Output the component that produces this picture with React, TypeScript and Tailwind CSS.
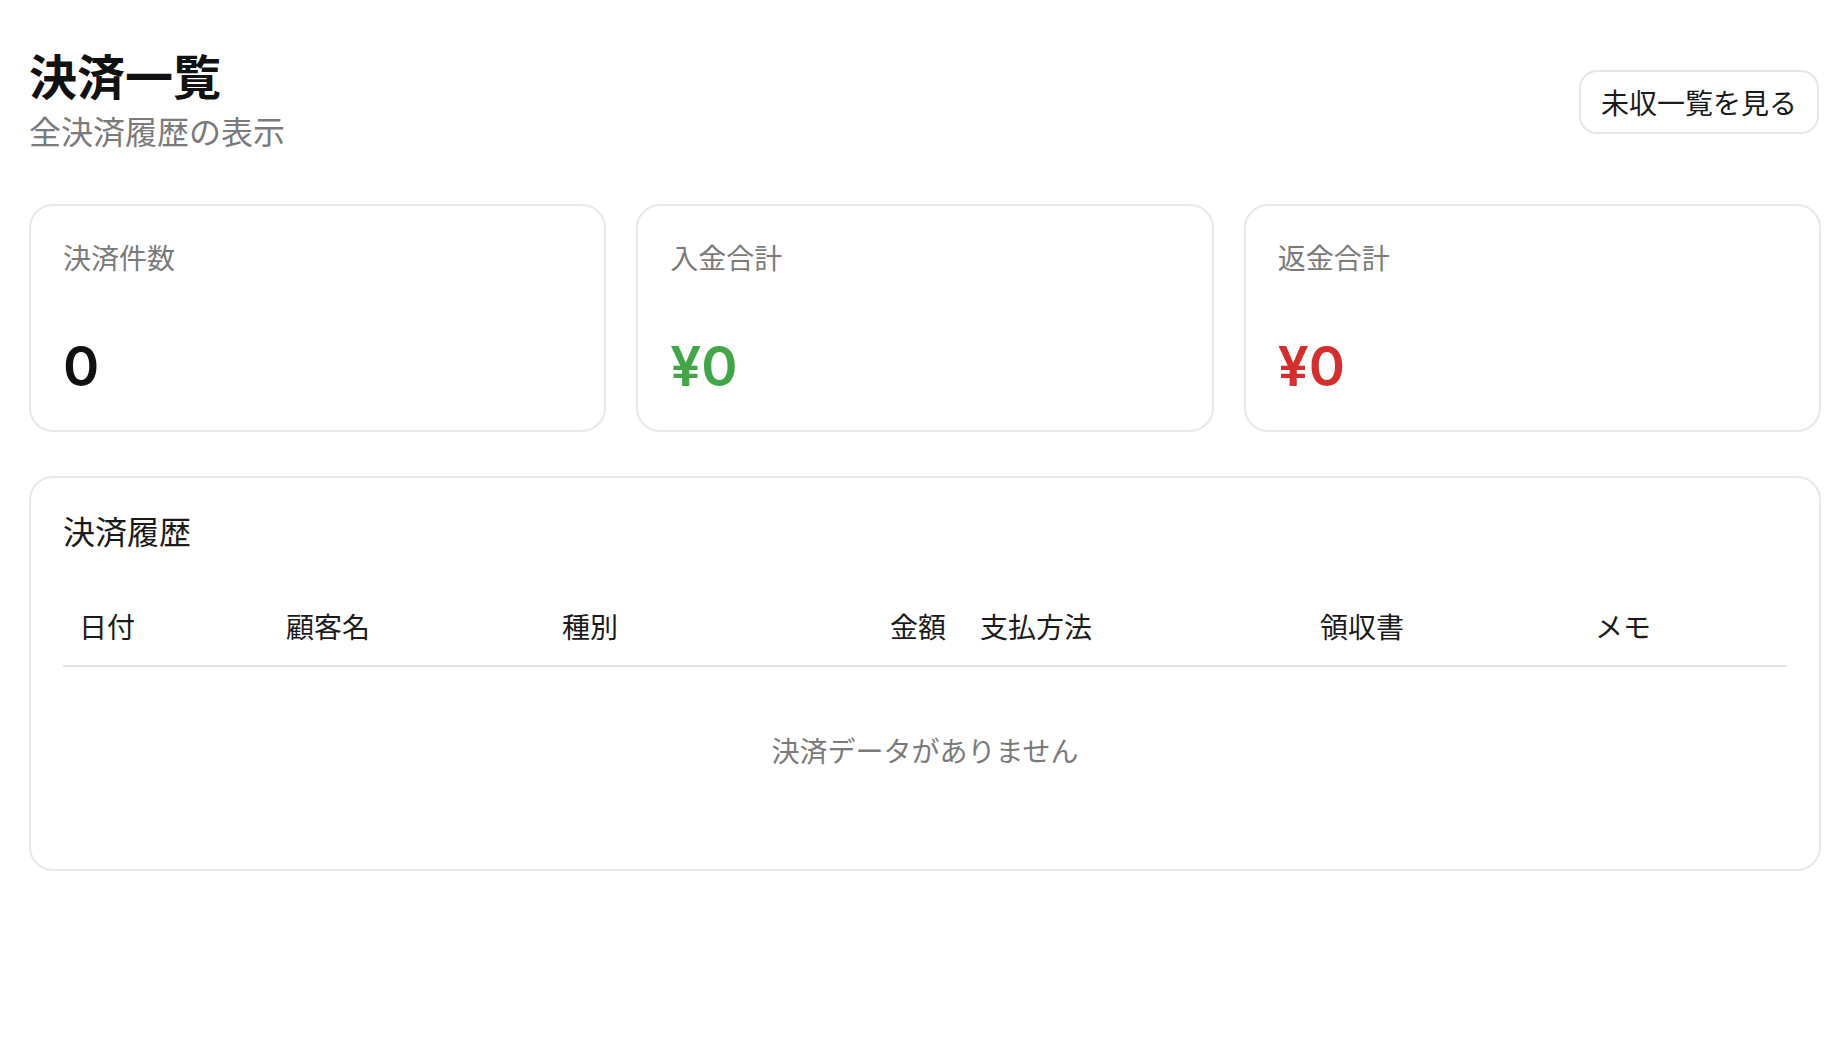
import React from "react";

type Stat = { label: string; value: string; color: string };

const stats: Stat[] = [
  { label: "決済件数", value: "0", color: "text-[#111111]" },
  { label: "入金合計", value: "¥0", color: "text-[#43a548]" },
  { label: "返金合計", value: "¥0", color: "text-[#d32f2f]" },
];

const columns = [
  { label: "日付", width: "w-[207px]", align: "text-left" },
  { label: "顧客名", width: "w-[276px]", align: "text-left" },
  { label: "種別", width: "w-[280px]", align: "text-left" },
  { label: "金額", width: "w-[138px]", align: "text-right" },
  { label: "支払方法", width: "w-[340px]", align: "text-left" },
  { label: "領収書", width: "w-[275px]", align: "text-left" },
  { label: "メモ", width: "", align: "text-left" },
];

function StatCard({ label, value, color }: Stat) {
  return (
    <div className="rounded-[24px] border-2 border-[#e8e8e8] bg-white px-8 pt-[30px] pb-[32px]">
      <p className="text-[28px] leading-[42px] text-[#7a7a7a]">{label}</p>
      <p
        className={`mt-[56px] font-['Inter','Liberation_Sans','Noto_Sans_CJK_JP',sans-serif] text-[55px] font-semibold leading-[64px] ${color}`}
      >
        {value}
      </p>
    </div>
  );
}

export default function App() {
  return (
    <div className="min-h-screen bg-white pt-[42px] pr-[25px] pl-[29px] font-['Noto_Sans_CJK_JP','Liberation_Sans',sans-serif] text-[#111111]">
      <header className="mb-[50px] flex items-center justify-between">
        <div>
          <h1 className="text-[48px] font-bold leading-[64px]">決済一覧</h1>
          <p className="text-[32px] leading-[48px] text-[#7a7a7a]">全決済履歴の表示</p>
        </div>
        <button className="mt-[7px] mr-[2px] rounded-[18px] border-2 border-[#e6e6e6] bg-white px-5 py-[9px] text-[28px] leading-[42px] text-[#1a1a1a]">
          未収一覧を見る
        </button>
      </header>

      <div className="grid grid-cols-3 gap-[30px]">
        {stats.map((s) => (
          <StatCard key={s.label} {...s} />
        ))}
      </div>

      <section className="mt-[44px] rounded-[24px] border-2 border-[#e8e8e8] bg-white px-8 pt-[30px] pb-8">
        <h2 className="text-[32px] leading-[44px] text-[#1a1a1a]">決済履歴</h2>
        <table className="mt-[33px] w-full border-collapse">
          <thead>
            <tr className="border-b-2 border-[#e3e3e3]">
              {columns.map((c) => (
                <th
                  key={c.label}
                  className={`pt-5 pr-[18px] pb-[18px] pl-4 text-[28px] font-normal leading-[42px] text-[#1a1a1a] ${c.width} ${c.align}`}
                >
                  {c.label}
                </th>
              ))}
            </tr>
          </thead>
          <tbody>
            <tr>
              <td
                colSpan={7}
                className="pt-[62px] pb-[66px] text-center text-[28px] leading-[42px] text-[#7a7a7a]"
              >
                決済データがありません
              </td>
            </tr>
          </tbody>
        </table>
      </section>
    </div>
  );
}
